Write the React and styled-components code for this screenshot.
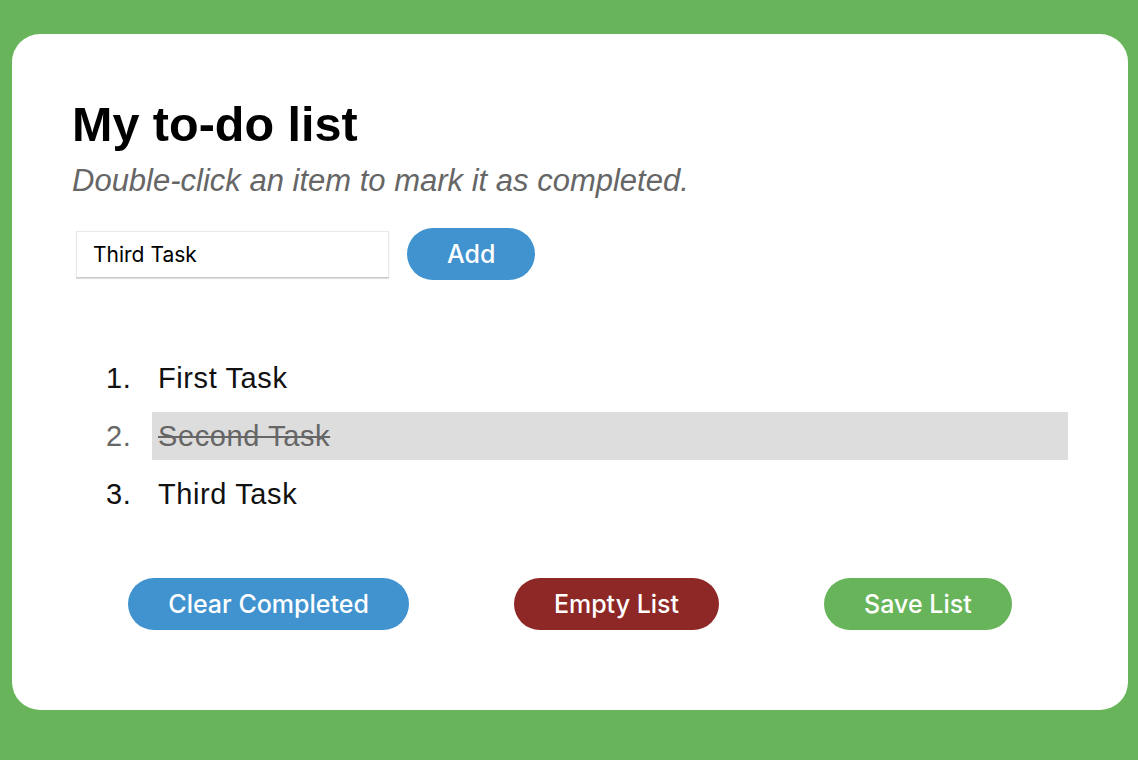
import React, { useState } from 'react';
import styled, { createGlobalStyle } from 'styled-components';

const GlobalStyle = createGlobalStyle`
  html, body {
    margin: 0;
    padding: 0;
    background: #68b45a;
  }
  body {
    font-family: "Liberation Sans", Arial, Helvetica, sans-serif;
  }
`;

const Page = styled.div`
  min-height: 760px;
  box-sizing: border-box;
  padding: 34px 10px 50px 12px;
  background: #68b45a;
`;

const Card = styled.main`
  background: #fff;
  border-radius: 28px;
  padding: 66px 60px 80px;
  box-sizing: border-box;
`;

const Title = styled.h1`
  margin: 0;
  font-size: 48.5px;
  line-height: 48px;
  font-weight: 700;
  color: #000;
`;

const Hint = styled.p`
  margin: 15px 0 0;
  font-size: 31px;
  line-height: 36px;
  font-style: italic;
  color: #666;
`;

const AddRow = styled.form`
  display: flex;
  align-items: center;
  gap: 18px;
  margin-top: 29px;
  padding-left: 4px;
`;

const TaskInput = styled.input`
  width: 313px;
  height: 47px;
  box-sizing: border-box;
  padding: 0 16px;
  border: 1px solid #e8e8e8;
  border-bottom-color: #c9c9c9;
  box-shadow: 0 1px 1px rgba(0, 0, 0, 0.12);
  font-family: Inter, "Noto Sans", sans-serif;
  font-size: 21px;
  color: #000;
  outline: none;
`;

const Pill = styled.button`
  height: 52px;
  padding: 0 40px;
  border: none;
  border-radius: 26px;
  background: ${(p) => p.$color};
  color: #fff;
  font-family: Inter, "Noto Sans", sans-serif;
  font-size: 25px;
  font-weight: 500;
  cursor: pointer;
`;

const TaskList = styled.ol`
  list-style: none;
  margin: 74px 0 0;
  padding: 0;
  display: flex;
  flex-direction: column;
  gap: 10px;
`;

const TaskRow = styled.li`
  display: grid;
  grid-template-columns: 80px 1fr;
  align-items: stretch;
  height: 48px;
  font-size: 29px;
  letter-spacing: 0.6px;
  color: ${(p) => (p.$done ? '#666' : '#111')};
  cursor: default;
  user-select: none;
`;

const TaskNumber = styled.span`
  display: flex;
  align-items: center;
  padding-left: 34px;
`;

const TaskText = styled.span`
  display: flex;
  align-items: center;
  padding-left: 6px;
  background: ${(p) => (p.$done ? '#dddddd' : 'transparent')};
  text-decoration: ${(p) => (p.$done ? 'line-through' : 'none')};
`;

const Actions = styled.div`
  display: flex;
  justify-content: center;
  gap: 105px;
  margin-top: 60px;
`;

const initialTasks = [
  { id: 1, label: 'First Task', done: false },
  { id: 2, label: 'Second Task', done: true },
  { id: 3, label: 'Third Task', done: false },
];

export default function App() {
  const [tasks, setTasks] = useState(initialTasks);
  const [draft, setDraft] = useState('Third Task');

  const addTask = (e) => {
    e.preventDefault();
    if (!draft.trim()) return;
    setTasks([...tasks, { id: Date.now(), label: draft.trim(), done: false }]);
    setDraft('');
  };

  const toggle = (id) => {
    setTasks(tasks.map((t) => (t.id === id ? { ...t, done: !t.done } : t)));
  };

  return (
    <Page>
      <GlobalStyle />
      <Card>
        <Title>My to-do list</Title>
        <Hint>Double-click an item to mark it as completed.</Hint>
        <AddRow onSubmit={addTask}>
          <TaskInput value={draft} onChange={(e) => setDraft(e.target.value)} />
          <Pill type="submit" $color="#4193d0">Add</Pill>
        </AddRow>
        <TaskList>
          {tasks.map((task, i) => (
            <TaskRow key={task.id} $done={task.done} onDoubleClick={() => toggle(task.id)}>
              <TaskNumber>{i + 1}.</TaskNumber>
              <TaskText $done={task.done}>{task.label}</TaskText>
            </TaskRow>
          ))}
        </TaskList>
        <Actions>
          <Pill type="button" $color="#4193d0" onClick={() => setTasks(tasks.filter((t) => !t.done))}>
            Clear Completed
          </Pill>
          <Pill type="button" $color="#8e2826" onClick={() => setTasks([])}>
            Empty List
          </Pill>
          <Pill type="button" $color="#68b45a">Save List</Pill>
        </Actions>
      </Card>
    </Page>
  );
}
